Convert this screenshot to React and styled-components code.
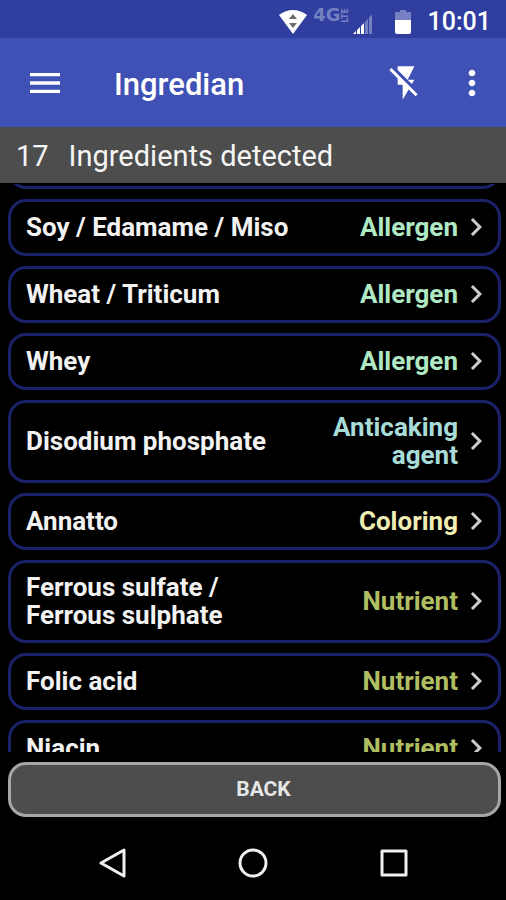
import React, { useLayoutEffect, useRef } from 'react';
import styled, { createGlobalStyle } from 'styled-components';
import {
  MdMenu,
  MdFlashOff,
  MdMoreVert,
  MdChevronRight
} from 'react-icons/md';

const GlobalStyle = createGlobalStyle`
  * {
    box-sizing: border-box;
  }
  body {
    margin: 0;
    background: #000;
    font-family: Roboto, 'Liberation Sans', sans-serif;
  }
  button {
    font-family: inherit;
    cursor: pointer;
  }
`;

const Screen = styled.div`
  display: flex;
  flex-direction: column;
  height: 100vh;
  color: #fff;
`;

const StatusBar = styled.div`
  display: flex;
  align-items: center;
  justify-content: flex-end;
  flex-shrink: 0;
  height: 38px;
  padding: 6px 15px 0 0;
  background: #303f9f;
  svg {
    display: block;
  }
`;

const Network = styled.span`
  display: flex;
  align-items: center;
  height: 16px;
  margin: 0 0 14px 6px;
  color: #7480c2;
  font-family: 'DejaVu Sans', sans-serif;
  font-size: 18px;
  line-height: 16px;
  font-weight: 700;
`;

const NetworkType = styled.small`
  font-size: 8px;
  line-height: 10px;
  writing-mode: vertical-rl;
  transform: rotate(180deg);
`;

const Signal = styled.svg`
  margin: 4px 22px 0 2px;
`;

const Time = styled.time`
  margin-left: 17px;
  font-size: 25px;
  line-height: 32px;
  font-weight: 500;
`;

const AppBar = styled.header`
  display: flex;
  align-items: center;
  flex-shrink: 0;
  height: 89px;
  padding: 0 14px 0 25px;
  background: #3f51b5;
`;

const IconButton = styled.button`
  display: flex;
  padding: 0;
  border: 0;
  background: none;
  color: #fff;
  font-size: 40px;
`;

const Title = styled.h1`
  flex: 1;
  margin: 0 0 0 49px;
  padding-top: 4px;
  font-size: 31px;
  line-height: 36px;
  font-weight: 500;
`;

const Actions = styled.div`
  display: flex;
  gap: 26px;
`;

const Summary = styled.p`
  display: flex;
  align-items: center;
  gap: 20px;
  flex-shrink: 0;
  height: 56px;
  margin: 0 0 1px;
  padding: 2px 16px 0;
  background: #4d4d4d;
  color: #f5f5f5;
  font-size: 29px;
  line-height: 32px;
`;

const List = styled.ul`
  display: flex;
  flex: 1;
  flex-direction: column;
  gap: 10px;
  min-height: 0;
  margin: 0;
  padding: 0 5px 0 8px;
  overflow-y: auto;
  scrollbar-width: none;
  list-style: none;
`;

const Card = styled.button`
  display: flex;
  align-items: center;
  width: 100%;
  min-height: 57px;
  padding: 10px 4px 11px 15px;
  border: 3px solid #1b2168;
  border-radius: 18px;
  background: #000;
  color: #f2f2f2;
  font-size: 26px;
  line-height: 28px;
  font-weight: 700;
  text-align: left;
  svg {
    flex-shrink: 0;
    margin: -8px 0;
    color: #ccc;
    font-size: 36px;
  }
`;

const Name = styled.span`
  flex: 5 1 0;
`;

const categoryColors = {
  Allergen: '#b0e8c4',
  'Anticaking agent': '#a8dcd9',
  Coloring: '#f0edb4',
  Nutrient: '#b0be62'
};

const Category = styled.span`
  flex: 3 1 0;
  color: ${props => categoryColors[props.$kind]};
  text-align: right;
`;

const BackButton = styled.button`
  flex-shrink: 0;
  height: 55px;
  margin: 10px 5px 0 8px;
  padding: 0 0 2px 18px;
  border: 3px solid #a6a6a6;
  border-radius: 18px;
  background: #4d4d4d;
  color: #e6e6e6;
  font-size: 21px;
  line-height: 24px;
  font-weight: 700;
`;

const NavBar = styled.nav`
  display: grid;
  grid-template-columns: repeat(3, 1fr);
  place-items: center;
  flex-shrink: 0;
  height: 83px;
  padding: 8px 42px 0;
`;

const ingredients = [
  { name: 'Soy / Edamame / Miso', category: 'Allergen' },
  { name: 'Wheat / Triticum', category: 'Allergen' },
  { name: 'Whey', category: 'Allergen' },
  { name: 'Disodium phosphate', category: 'Anticaking agent' },
  { name: 'Annatto', category: 'Coloring' },
  { name: 'Ferrous sulfate / Ferrous sulphate', category: 'Nutrient' },
  { name: 'Folic acid', category: 'Nutrient' },
  { name: 'Niacin', category: 'Nutrient' }
];

const WifiIcon = () => (
  <svg width="28" height="24" viewBox="0 0 28 24">
    <path d="M0 5Q14-5 28 5L14 24Z" fill="#fff" />
    <path d="M10 9l4-5 4 5zM10 13h8l-4 5z" fill="#6b6b6b" />
  </svg>
);

const SignalIcon = () => (
  <Signal width="20" height="20" viewBox="0 0 20 20">
    <path d="M0 20l3-3v3zM4 16l3-3v7H4zM8 12l3-3v11H8z" fill="#fff" />
    <path d="M12 8l3-3v15h-3zM16 4l3-4v20h-3z" fill="#7480c2" />
  </Signal>
);

const BatteryIcon = () => (
  <svg width="16" height="24" viewBox="0 0 16 24">
    <path d="M5 0h6v2h5v9H0V2h5z" fill="#7480c2" />
    <path d="M0 10h16v12q0 2-2 2H2q-2 0-2-2z" fill="#fff" />
  </svg>
);

const NavIcon = ({ children }) => (
  <svg
    width="30"
    height="30"
    viewBox="0 0 30 30"
    fill="none"
    stroke="#f0f0f0"
    strokeWidth="3"
    strokeLinejoin="round"
  >
    {children}
  </svg>
);

const App = () => {
  const list = useRef(null);

  // start just past the first card, with its lower edge still showing
  useLayoutEffect(() => {
    list.current.scrollTop = 52;
  }, []);

  return (
    <Screen>
      <GlobalStyle />
      <StatusBar>
        <WifiIcon />
        <Network>
          4G<NetworkType>LTE</NetworkType>
        </Network>
        <SignalIcon />
        <BatteryIcon />
        <Time>10:01</Time>
      </StatusBar>
      <AppBar>
        <IconButton aria-label="Menu">
          <MdMenu />
        </IconButton>
        <Title>Ingredian</Title>
        <Actions>
          <IconButton aria-label="Flash off">
            <MdFlashOff />
          </IconButton>
          <IconButton aria-label="More options">
            <MdMoreVert />
          </IconButton>
        </Actions>
      </AppBar>
      <Summary>
        <span>17</span>
        <span>Ingredients detected</span>
      </Summary>
      <List ref={list}>
        <li>
          <Card as="div" />
        </li>
        {ingredients.map(({ name, category }) => (
          <li key={name}>
            <Card>
              <Name>{name}</Name>
              <Category $kind={category}>{category}</Category>
              <MdChevronRight />
            </Card>
          </li>
        ))}
      </List>
      <BackButton>BACK</BackButton>
      <NavBar>
        <IconButton aria-label="Back">
          <NavIcon>
            <path d="M4 15L27 2v26z" />
          </NavIcon>
        </IconButton>
        <IconButton aria-label="Home">
          <NavIcon>
            <circle cx="15" cy="15" r="13" />
          </NavIcon>
        </IconButton>
        <IconButton aria-label="Recent apps">
          <NavIcon>
            <path d="M3 3h24v24H3z" />
          </NavIcon>
        </IconButton>
      </NavBar>
    </Screen>
  );
};

export default App;
